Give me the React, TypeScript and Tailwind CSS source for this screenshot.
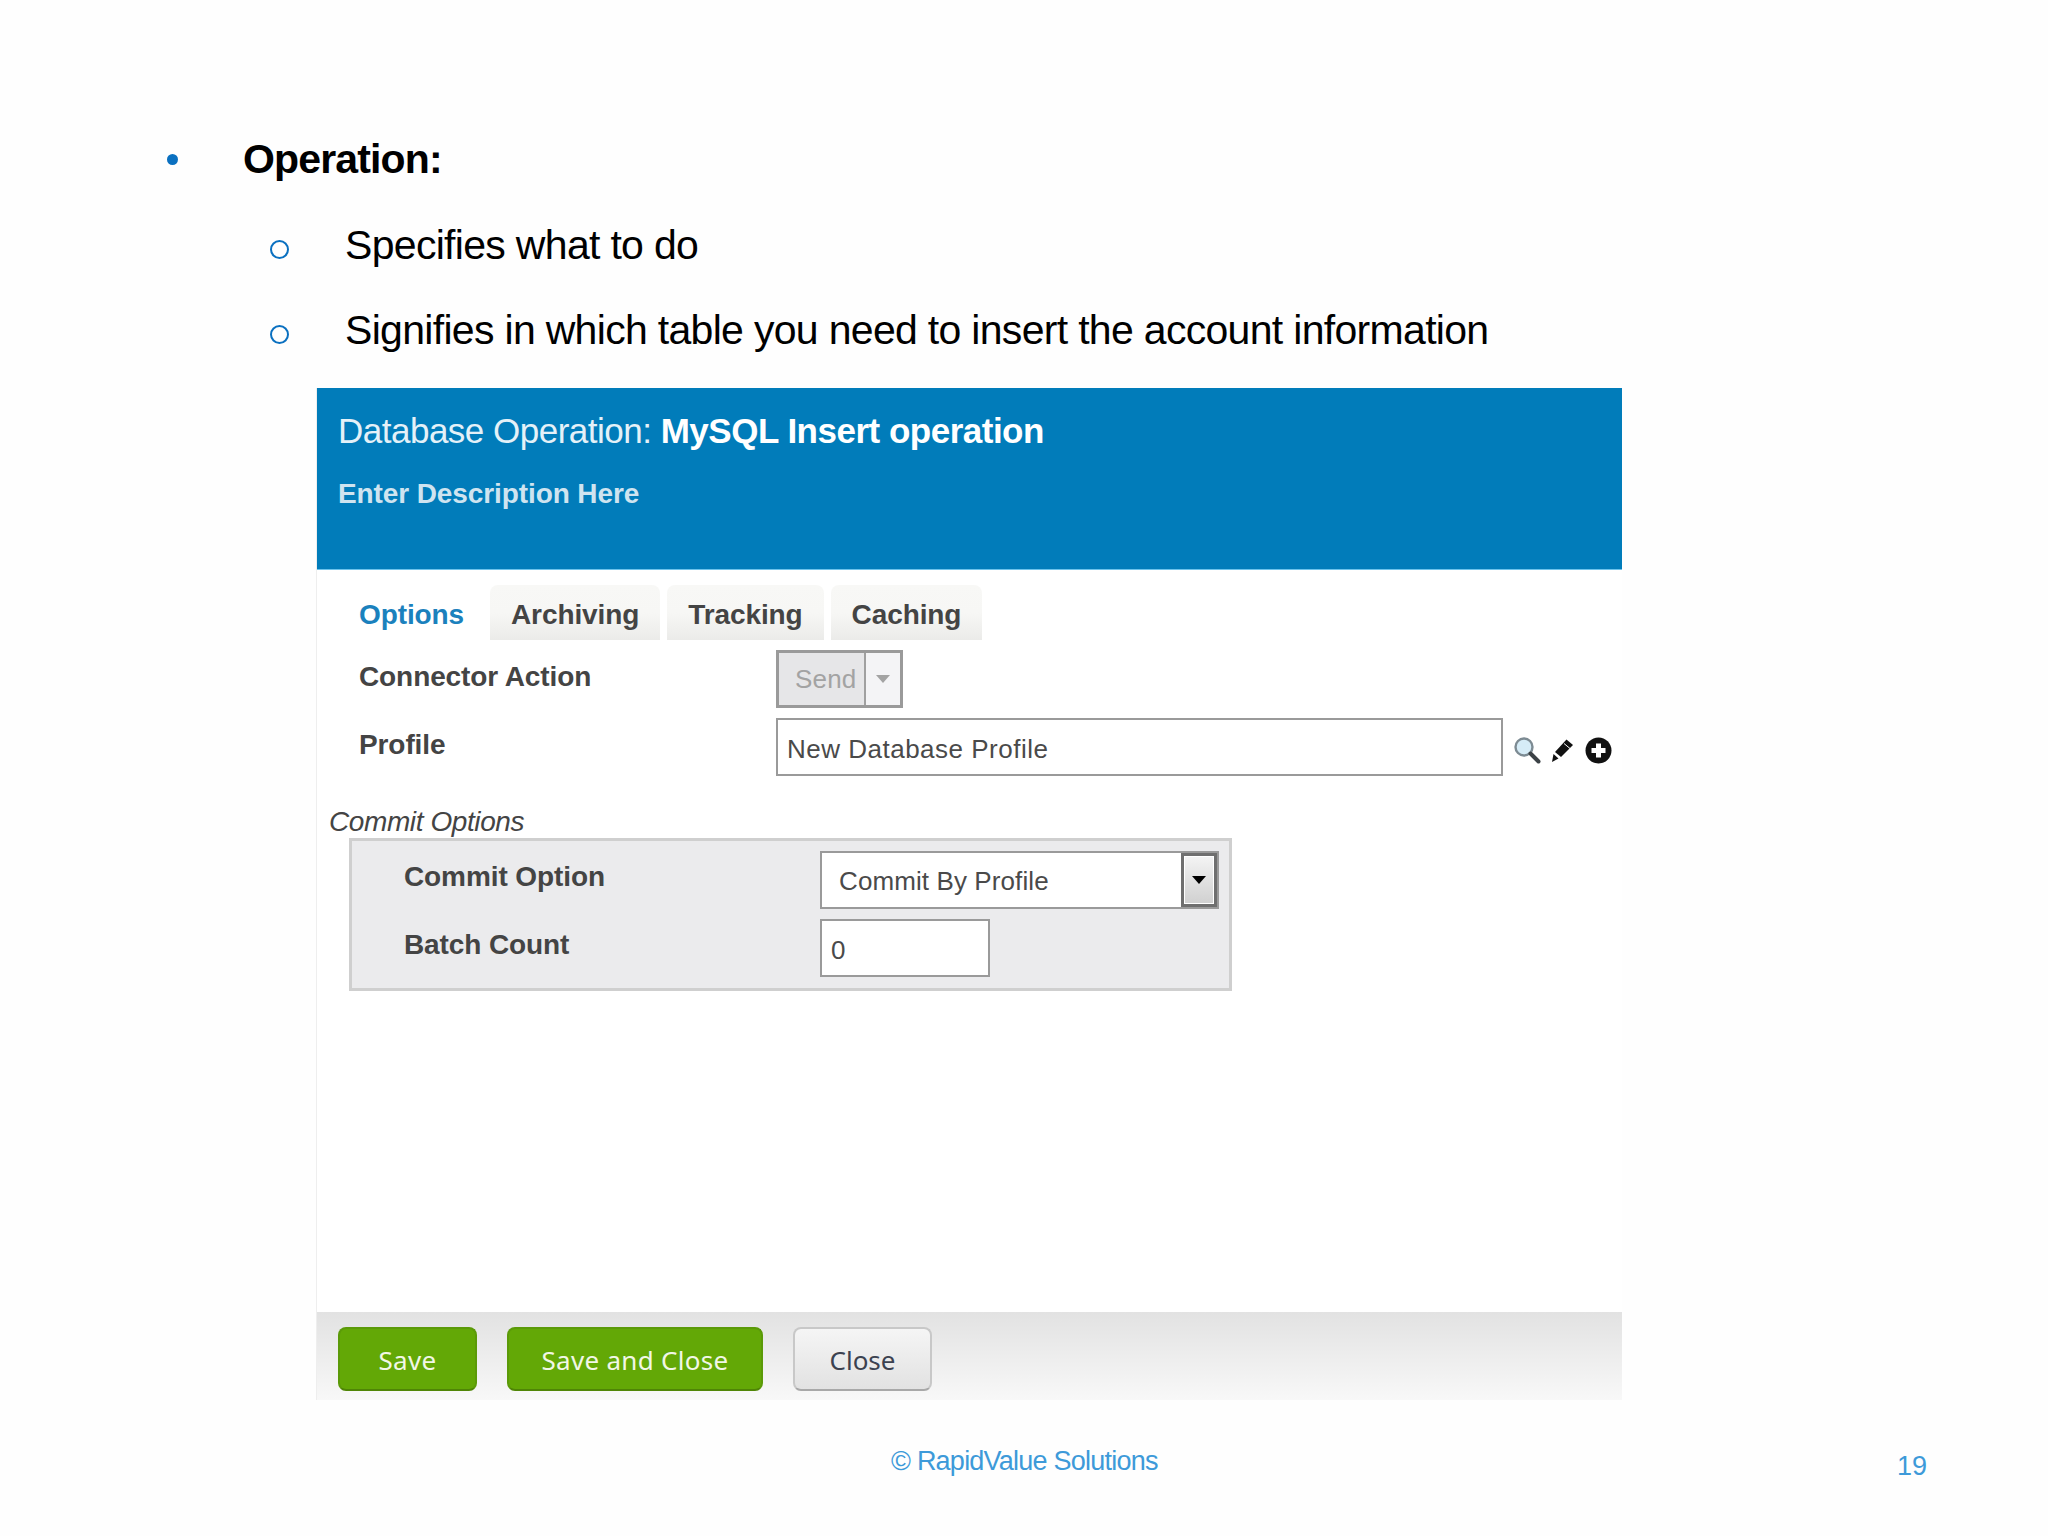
const ui = "font-['Noto_Sans','Liberation_Sans',sans-serif]";
const label = "font-['Liberation_Sans',sans-serif] font-bold text-[28px] text-[#444444] tracking-[-0.1px]";
const field = "font-['Liberation_Sans',sans-serif] text-[26px] text-[#4a4a4a]";

function Tab({ name }: { name: string }) {
  return (
    <div className={`${label} h-[55px] px-[21px] pt-[5px] flex items-center rounded-t-[8px] bg-gradient-to-b from-[#f8f8f6] via-[#f7f7f5] to-[#ebebe9]`}>
      {name}
    </div>
  );
}

function SearchIcon() {
  return (
    <svg width="28" height="28" viewBox="0 0 28 28">
      <circle cx="11" cy="11" r="8.5" fill="#d6ecf7" stroke="#7d8b93" strokeWidth="2.4" />
      <path d="M17.5 17.5 L25.5 25.5" stroke="#3c4246" strokeWidth="4" strokeLinecap="round" />
    </svg>
  );
}

function PencilIcon() {
  return (
    <svg width="24" height="26" viewBox="0 0 24 26">
      <path d="M15.5 2.5 L22 8 L10 20 L4 15 Z" fill="#111" />
      <path d="M13 6.5 L19 11.5" stroke="#fff" strokeWidth="1" />
      <path d="M2.5 17 L7.5 21.5 L1 25 Z" fill="#111" />
    </svg>
  );
}

function PlusIcon() {
  return (
    <svg width="27" height="27" viewBox="0 0 27 27">
      <circle cx="13.5" cy="13.5" r="13" fill="#111" />
      <path d="M13.5 6.5 V20.5 M6.5 13.5 H20.5" stroke="#fff" strokeWidth="5" />
    </svg>
  );
}

export default function App() {
  return (
    <div className="w-[2048px] h-[1536px] bg-[#fefefe] flex flex-col relative font-['Liberation_Sans',Arial,sans-serif] text-black">
      {/* Slide bullets */}
      <div className="pt-[134px] pl-[167px]">
        <div className="flex items-center h-[50px]">
          <span className="w-[76px]">
            <span className="block w-[11px] h-[11px] rounded-full bg-[#0a70c0]" />
          </span>
          <span className="text-[41px] font-bold tracking-[-0.85px] leading-none">Operation:</span>
        </div>
        <div className="flex items-center h-[50px] mt-[36px] pl-[103px]">
          <span className="w-[75px] pt-[8px]">
            <span className="block w-[19px] h-[19px] rounded-full border-2 border-[#0a70c0]" />
          </span>
          <span className="text-[41px] tracking-[-0.69px] leading-none">Specifies what to do</span>
        </div>
        <div className="flex items-center h-[50px] mt-[35px] pl-[103px]">
          <span className="w-[75px] pt-[8px]">
            <span className="block w-[19px] h-[19px] rounded-full border-2 border-[#0a70c0]" />
          </span>
          <span className="text-[41px] tracking-[-0.69px] leading-none">Signifies in which table you need to insert the account information</span>
        </div>
      </div>

      {/* Embedded dialog screenshot */}
      <div className={`${ui} ml-[316px] mt-[33px] w-[1306px] h-[1012px] flex flex-col border-l border-[#eeeeee]`}>
        <div className="h-[182px] bg-[#017cba] border-b border-[#6cc3ec] pl-[21px] pt-[20px] text-white">
          <div className="font-['Liberation_Sans',sans-serif] text-[35px] leading-[46px] tracking-[-0.5px] text-[#e4f1f8]">
            Database Operation: <span className="font-bold text-white">MySQL Insert operation</span>
          </div>
          <div className={`${label} mt-[22px] leading-[36px] !text-[#cfe4f0]`}>Enter Description Here</div>
        </div>

        <div className="flex-1 bg-white">
          <div className="flex pl-[42px] mt-[15px] gap-[7px]">
            <div className={`${label} w-[124px] h-[55px] pt-[5px] flex items-center !text-[#1b81bd]`}>Options</div>
            <Tab name="Archiving" />
            <Tab name="Tracking" />
            <Tab name="Caching" />
          </div>

          <div className="flex pl-[42px] mt-[10px]">
            <div className={`${label} w-[417px] leading-[54px]`}>Connector Action</div>
            <div className="w-[127px] h-[58px] flex border-[3px] border-[#9a9a9a] bg-[#e6e6e8]">
              <div className="flex-1 flex items-center pl-[16px] text-[#a3a3a3] text-[26px] tracking-[0.2px] font-['Liberation_Sans',sans-serif]">Send</div>
              <div className="w-[36px] flex items-center justify-center border-l-2 border-[#a0a0a0] bg-[#f4f4f6]">
                <span className="w-0 h-0 border-x-[7px] border-x-transparent border-t-[8px] border-t-[#a3a3a3]" />
              </div>
            </div>
          </div>

          <div className="flex pl-[42px] mt-[10px]">
            <div className={`${label} w-[417px] leading-[54px]`}>Profile</div>
            <div className={`${field} w-[727px] h-[58px] flex items-center border-2 border-[#9a9a9a] bg-white pl-[9px] pt-[5px] tracking-[0.5px]`}>New Database Profile</div>
            <div className="flex items-center gap-[10px] ml-[10px] pt-[6px]">
              <SearchIcon />
              <PencilIcon />
              <PlusIcon />
            </div>
          </div>

          <div className="ml-[12px] mt-[29px] font-['Liberation_Sans',sans-serif] italic text-[#444444] text-[28px] leading-[33px] tracking-[-0.4px]">Commit Options</div>
          <div className="ml-[32px] w-[883px] h-[153px] border-[3px] border-[#cfcfcf] bg-[#ebebed] pt-[10px] pl-[52px]">
            <div className="flex">
              <div className={`${label} w-[416px] leading-[52px]`}>Commit Option</div>
              <div className="w-[399px] h-[58px] flex border-2 border-[#9a9a9a] bg-white">
                <div className={`${field} flex-1 flex items-center pl-[17px] pt-[2px] tracking-[0.1px]`}>Commit By Profile</div>
                <div className="w-[36px] flex items-center justify-center border-[3px] border-[#6f6f6f] bg-gradient-to-b from-[#f4f4f4] to-[#d0d0d0] outline outline-1 -outline-offset-4 outline-white">
                  <span className="w-0 h-0 border-x-[7px] border-x-transparent border-t-[8px] border-t-black" />
                </div>
              </div>
            </div>
            <div className="flex mt-[10px]">
              <div className={`${label} w-[416px] leading-[52px]`}>Batch Count</div>
              <div className={`${field} w-[170px] h-[58px] flex items-center border-2 border-[#9a9a9a] bg-white pl-[9px] pt-[5px]`}>0</div>
            </div>
          </div>
        </div>

        <div className="h-[88px] bg-gradient-to-b from-[#e2e2e2] to-[#f8f8f8] flex items-center gap-[30px] pl-[21px] pt-[5px]">
          <button className="w-[139px] h-[64px] pt-[4px] rounded-[8px] bg-[#63a806] border-2 border-[#5b9a08] border-b-[#4f8506] text-[#f1f7e6] text-[26px] tracking-[0.3px]">Save</button>
          <button className="w-[256px] h-[64px] pt-[4px] rounded-[8px] bg-[#63a806] border-2 border-[#5b9a08] border-b-[#4f8506] text-[#f1f7e6] text-[26px] tracking-[0.3px]">Save and Close</button>
          <button className="w-[139px] h-[64px] pt-[4px] rounded-[8px] bg-gradient-to-b from-[#f5f5f5] to-[#e2e2e2] border-2 border-[#c8c8c8] border-b-[#a8a8a8] text-[#3c4250] text-[26px]">Close</button>
        </div>
      </div>

      {/* Slide footer */}
      <div className="flex items-start mt-[45px] pl-[891px]">
        <div className="w-[266px] text-center text-[#3d9ad9] text-[27px] leading-[32px] tracking-[-0.76px] whitespace-nowrap">© RapidValue Solutions</div>
        <div className="ml-[740px] mt-[5px] text-[#3d9ad9] text-[27px] leading-[32px]">19</div>
      </div>
    </div>
  );
}
